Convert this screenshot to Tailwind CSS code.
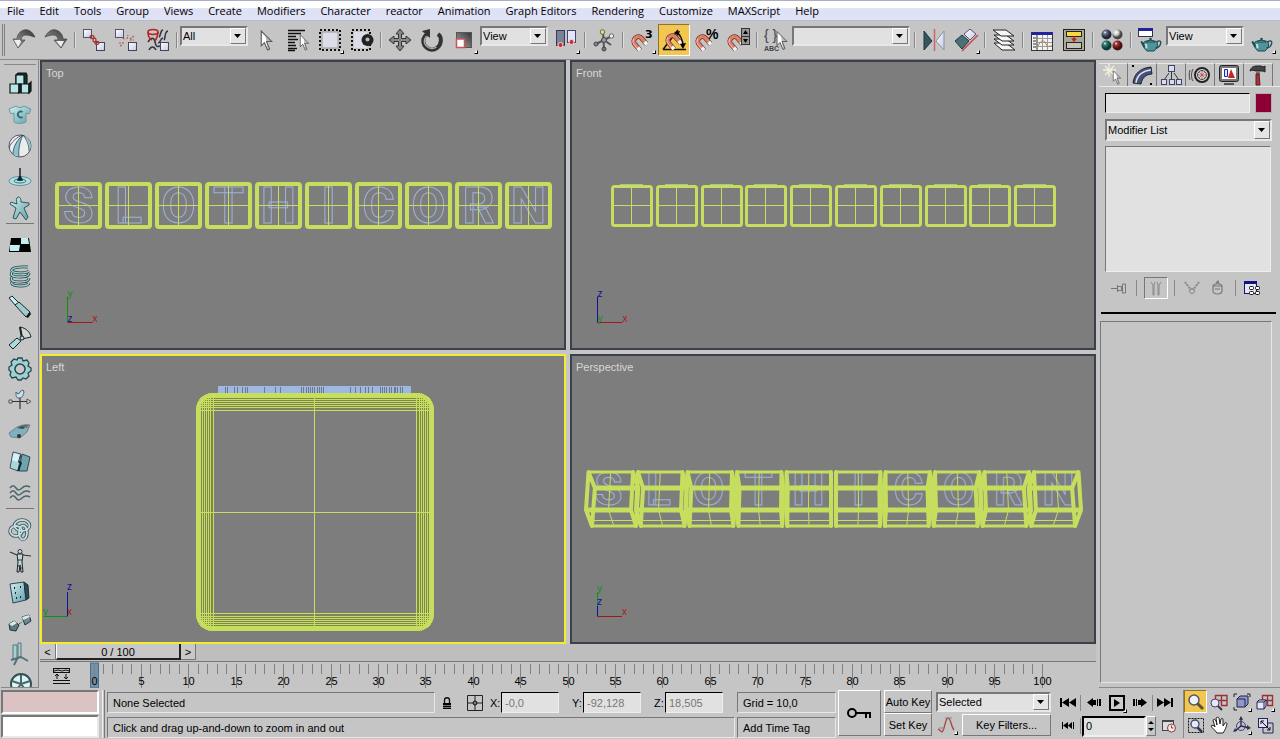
<!DOCTYPE html>
<html lang="en">
<head>
    <meta charset="UTF-8">
    <meta name="viewport" content="width=device-width, initial-scale=1.0">
    <title>3D Editor</title>
    <script src="https://cdn.jsdelivr.net/npm/@tailwindcss/browser@4"></script>
</head>
<body class="flex h-screen min-h-[600px] flex-col overflow-hidden bg-[#c5c5c5] font-['Liberation_Sans',sans-serif] text-[11px] leading-4 text-black">

    <!-- Shared gradients and small parts -->
    <svg class="absolute h-0 w-0" aria-hidden="true">
        <defs>
            <linearGradient id="steelR" x1="1" y1="0" x2="0" y2="1"><stop offset="0" stop-color="#333"/><stop offset="1" stop-color="#aaa"/></linearGradient>
            <linearGradient id="teal" x1="0" y1="0" x2="1" y2="1"><stop offset="0" stop-color="#d4f1f1"/><stop offset="1" stop-color="#5f9ea6"/></linearGradient>
            <linearGradient id="paper" x1="0" y1="0" x2="1" y2="1"><stop offset="0" stop-color="#fff"/><stop offset="1" stop-color="#c3c9e6"/></linearGradient>
            <radialGradient id="ballN" cx=".35" cy=".3"><stop offset="0" stop-color="#fff"/><stop offset=".3" stop-color="#6b7594"/><stop offset="1" stop-color="#1f2538"/></radialGradient>
            <radialGradient id="ballW" cx=".35" cy=".3"><stop offset="0" stop-color="#fff"/><stop offset=".5" stop-color="#ccc"/><stop offset="1" stop-color="#444"/></radialGradient>
            <radialGradient id="ballG" cx=".35" cy=".3"><stop offset="0" stop-color="#fff"/><stop offset=".3" stop-color="#36897c"/><stop offset="1" stop-color="#0d3a33"/></radialGradient>
            <radialGradient id="ballR" cx=".35" cy=".3"><stop offset="0" stop-color="#fff"/><stop offset=".3" stop-color="#b33a3a"/><stop offset="1" stop-color="#4a0f0f"/></radialGradient>
            <symbol id="fly" viewBox="0 0 4 4"><path d="M4 0v4H0z" fill="#000"/><path d="M3 0v3H0z" fill="#fff"/></symbol>
            <symbol id="cursor" viewBox="0 0 12 20"><path d="M1 1v14l3-3 3 7 2-1-3-7h5z" fill="#fff" stroke="#555"/><path d="M7 19l2-1-3-7h5L5 5z" fill="#777" opacity=".5"/></symbol>
            <symbol id="magnet" viewBox="0 0 18 18"><g transform="rotate(-40 9 9)" fill="none"><path d="M4.500 16V8a4.500 4.500 0 0 1 9 0v8" stroke="#6e3325" stroke-width="4.800"/><path d="M4.500 15.500V8a4.500 4.500 0 0 1 9 0v7.500" stroke="#dc8068" stroke-width="3.400"/><path d="M4.500 12.500v3.500M13.500 12.500v3.500" stroke="#f4f4f4" stroke-width="3.600"/><path d="M3.500 12V8a5.500 5.500 0 0 1 4-5" stroke="#f3b9a8"/></g></symbol>
            <symbol id="teapot" viewBox="0 0 22 15"><path d="M4 5c-1 2-1 6 3 9h7c4-3 4-7 3-9-3-2-10-2-13 0z" fill="#4f939b" stroke="#1d4a50"/><path d="M4.500 10C3 9 3 6 1 4.500" fill="none" stroke="#1d4a50" stroke-width="2"/><path d="M16.500 5c3-2 5-1 4 2s-3 4-5 4" fill="none" stroke="#1d4a50" stroke-width="1.300"/><path d="M6 5c2-2 7-2 9 0z" fill="#6fb5bc" stroke="#1d4a50"/><circle cx="10.500" cy="2" r="1.300" fill="#1d4a50"/><path d="M6 7c0 2 0 3 1 4" stroke="#bde4e6" stroke-width="2" fill="none"/></symbol>
            <symbol id="drop" viewBox="0 0 8 4"><path d="M0 0h7L3.500 4z"/></symbol>
        </defs>
    </svg>

    <nav class="flex h-[21px] shrink-0 items-center gap-[15px] border-t border-b border-t-[#a9b0bf] border-b-[#b9bcc8] bg-linear-to-b from-white from-35% to-[#dfe2f5] to-40% pl-[7px] font-['Open_Sans',sans-serif] text-[11px] whitespace-nowrap">
        <a href="#">File</a>
        <a href="#">Edit</a>
        <a href="#">Tools</a>
        <a href="#">Group</a>
        <a href="#">Views</a>
        <a href="#">Create</a>
        <a href="#">Modifiers</a>
        <a href="#">Character</a>
        <a href="#">reactor</a>
        <a href="#">Animation</a>
        <a href="#">Graph Editors</a>
        <a href="#">Rendering</a>
        <a href="#">Customize</a>
        <a href="#">MAXScript</a>
        <a href="#">Help</a>
    </nav>

    <!-- Main toolbar -->
    <div class="flex h-[39px] shrink-0 items-center border-b border-[#8a8a8a]">
        <div class="mr-[3px] ml-[2px] h-8 w-[3px] border-x border-[#808080]"></div>
        <button aria-label="Undo" class="flex h-8 w-8 items-center justify-center"><svg class="h-7 w-7" viewBox="0 0 28 28"><path d="M25 11C22 5 18 3 14 4S7 9 7 13H3l5 9 7-8h-4c0-3 2-5 5-5s5 1 8 2z" fill="url(#steelR)" stroke="#444" stroke-width=".7"/><path d="M4 14l4 7 3-5-1-2z" fill="#eee"/></svg></button>
        <button aria-label="Redo" class="flex h-8 w-8 items-center justify-center"><svg class="h-7 w-7" viewBox="0 0 28 28"><path d="M3 11C6 5 10 3 14 4s7 5 7 9h4l-6 9-7-8h4c0-3-2-5-5-5s-5 1-8 2z" fill="url(#steelR)" stroke="#444" stroke-width=".7"/><path d="M14 15l5 6 3-6z" fill="#eee"/></svg></button>
        <span class="mx-[2px] h-4 w-[2px] border-l border-[#888] bg-[#ddd]"></span>
        <button aria-label="Select and link" class="flex h-8 w-8 items-center justify-center"><svg class="h-7 w-7" viewBox="0 0 28 28"><rect x="3.500" y="3.500" width="8" height="8" fill="url(#paper)" stroke="#556"/><rect x="16.500" y="16.500" width="8" height="8" fill="url(#paper)" stroke="#445"/><g fill="none" stroke="#a33" stroke-width="1.300"><ellipse cx="12" cy="11" rx="2" ry="1.500"/><ellipse cx="14.500" cy="14" rx="1.500" ry="2"/><ellipse cx="17" cy="17" rx="2" ry="1.500"/></g></svg></button>
        <button aria-label="Unlink selection" class="flex h-8 w-8 items-center justify-center"><svg class="h-7 w-7" viewBox="0 0 28 28"><rect x="3.500" y="3.500" width="8" height="8" fill="url(#paper)" stroke="#556"/><rect x="16.500" y="16.500" width="8" height="8" fill="url(#paper)" stroke="#445"/><path d="M11 12l2 2m-2 2v3m-4-2h3m5-4l1-4m2 4l4-3m-4 4h4M8 20l2-1" stroke="#b55" stroke-width="1.200" stroke-dasharray="2 1"/></svg></button>
        <button aria-label="Bind to space warp" class="flex h-8 w-8 items-center justify-center"><svg class="h-7 w-7" viewBox="0 0 28 28"><g fill="none" stroke="#334" stroke-width="1.500"><path d="M4 16c3-5 6-5 7 0s2 5 5 4M5 24c2-4 5-4 7 0M15 11c2-1 1-7 4-7M20 14c2-3 0-8 4-9M14 17c3 0 2-5 5-5"/></g><g fill="none" stroke="#b22" stroke-width="1.600"><ellipse cx="9" cy="6" rx="5" ry="2.500"/><path d="M4 6c0 5 2 7 4 8M14 6c0 4-1 6-3 9"/></g><rect x="16.500" y="16.500" width="8" height="8" fill="url(#paper)" stroke="#445"/></svg></button>
        <span class="mx-[2px] h-4 w-[2px] border-l border-[#888] bg-[#ddd]"></span>
        <div class="relative mt-[5px] mr-[2px] h-5 w-[68px] self-start border-2 border-t-[#777] border-r-[#e8e8e8] border-b-[#e8e8e8] border-l-[#777] bg-[#e1e1e1]">
            <select aria-label="Selection filter" class="h-4 w-full appearance-none bg-transparent pl-px leading-4 outline-none"><option>All</option></select>
            <span class="pointer-events-none absolute inset-y-0 right-0 flex w-4 items-center justify-center border border-t-white border-r-[#777] border-b-[#777] border-l-white bg-[#e4e4e4]"><svg class="h-1 w-2"><use href="#drop"/></svg></span>
        </div>
        <button aria-label="Select object" class="flex h-8 w-8 items-center justify-center"><svg class="h-7 w-7" viewBox="0 0 28 28"><use href="#cursor" x="8" y="4" width="13" height="21"/></svg></button>
        <button aria-label="Select by name" class="flex h-8 w-8 items-center justify-center"><svg class="h-7 w-7" viewBox="0 0 28 28"><path d="M4 4.500h17M4 7.500h13M4 10.500h8M4 13.500h10M4 16.500h7M4 19.500h8M4 22.500h9M4 24.500h7" stroke="#111" stroke-width="1.300"/><use href="#cursor" x="15" y="8" width="11" height="17"/></svg></button>
        <button aria-label="Rectangular selection region" class="flex h-8 w-8 items-center justify-center"><svg class="h-7 w-7" viewBox="0 0 28 28"><rect x="6" y="6" width="16" height="16" fill="#dcdde8" stroke="#999"/><rect x="4" y="4" width="20" height="20" fill="none" stroke="#111" stroke-width="2" stroke-dasharray="2 2"/><use href="#fly" x="24" y="24" width="4" height="4"/></svg></button>
        <button aria-label="Window or crossing" class="flex h-8 w-8 items-center justify-center"><svg class="h-7 w-7" viewBox="0 0 28 28"><rect x="6" y="6" width="13" height="16" fill="#dcdde8"/><rect x="4" y="4" width="18" height="20" fill="none" stroke="#111" stroke-width="2" stroke-dasharray="2 2"/><circle cx="19.500" cy="14" r="6" fill="#222"/><circle cx="19.500" cy="13.500" r="2" fill="#bbb"/></svg></button>
        <span class="mx-[2px] h-4 w-[2px] border-l border-[#888] bg-[#ddd]"></span>
        <button aria-label="Move" class="flex h-8 w-8 items-center justify-center"><svg class="h-7 w-7" viewBox="0 0 28 28"><path d="M14 3l4 5h-2.500v4.500H20V10l5 4-5 4v-2.500h-4.500V20H18l-4 5-4-5h2.500v-4.500H8V18l-5-4 5-4v2.500h4.500V8H10z" fill="#888" stroke="#333"/></svg></button>
        <button aria-label="Rotate" class="flex h-8 w-8 items-center justify-center"><svg class="h-7 w-7" viewBox="0 0 28 28"><path d="M9 8c-5 4-5 10 0 14 3 2 7 2 10 0 5-4 5-11 1-14" fill="none" stroke="#333" stroke-width="4"/><path d="M8.500 10c-3 4-3 8 1 11 3 2 6 2 9 0" fill="none" stroke="#aaa" stroke-width="1.300"/><path d="M4 5l8-2v9z" fill="#333"/></svg></button>
        <button aria-label="Scale" class="flex h-8 w-8 items-center justify-center"><svg class="h-7 w-7" viewBox="0 0 28 28"><rect x="6.500" y="6.500" width="15" height="15" fill="url(#steelR)" stroke="#555"/><rect x="6.500" y="13" width="8" height="8.500" fill="#fff" stroke="#c55" stroke-width="1.500"/><use href="#fly" x="24" y="24" width="4" height="4"/></svg></button>
        <div class="relative mt-[5px] mr-[2px] h-5 w-[68px] self-start border-2 border-t-[#777] border-r-[#e8e8e8] border-b-[#e8e8e8] border-l-[#777] bg-[#e1e1e1]">
            <select aria-label="Reference coordinate system" class="h-4 w-full appearance-none bg-transparent pl-px leading-4 outline-none"><option>View</option></select>
            <span class="pointer-events-none absolute inset-y-0 right-0 flex w-4 items-center justify-center border border-t-white border-r-[#777] border-b-[#777] border-l-white bg-[#e4e4e4]"><svg class="h-1 w-2"><use href="#drop"/></svg></span>
        </div>
        <button aria-label="Use pivot point center" class="flex h-8 w-8 items-center justify-center"><svg class="h-7 w-7" viewBox="0 0 28 28"><rect x="4.500" y="4.500" width="8" height="15" fill="#7a8297" stroke="#333b55"/><rect x="15.500" y="4.500" width="8" height="12" fill="#e2e6f5" stroke="#447"/><circle cx="8.500" cy="19" r="2.500" fill="#b33" stroke="#fcc"/><circle cx="19.500" cy="16" r="2.500" fill="#b33" stroke="#fcc"/><use href="#fly" x="24" y="24" width="4" height="4"/></svg></button>
        <span class="mx-[2px] h-4 w-[2px] border-l border-[#888] bg-[#ddd]"></span>
        <button aria-label="Select and manipulate" class="flex h-8 w-8 items-center justify-center"><svg class="h-7 w-7" viewBox="0 0 28 28"><path d="M13 6l1 17M6 18l8-4 8-4M14 14l7 5" stroke="#555" stroke-width="2" fill="none"/><circle cx="12.500" cy="6" r="2.300" fill="#e9df6b" stroke="#665"/><circle cx="21.500" cy="10" r="2.200" fill="#eee" stroke="#666"/><circle cx="14" cy="14" r="2.500" fill="#999" stroke="#444"/><circle cx="14" cy="23" r="2" fill="#777" stroke="#444"/><circle cx="6" cy="18" r="2" fill="#888" stroke="#444"/></svg></button>
        <span class="mx-[2px] h-4 w-[2px] border-l border-[#888] bg-[#ddd]"></span>
        <button aria-label="Snaps toggle" class="flex h-8 w-8 items-center justify-center"><svg class="h-7 w-7" viewBox="0 0 28 28"><use href="#magnet" x="2" y="7" width="18" height="18"/><text x="17" y="12" class="font-['DejaVu_Sans',sans-serif] text-[11px] font-bold">3</text><use href="#fly" x="24" y="24" width="4" height="4"/></svg></button>
        <button aria-label="Angle snap toggle" aria-pressed="true" class="flex h-8 w-8 items-center justify-center border border-t-[#8a7530] border-r-white border-b-white border-l-[#8a7530] bg-[#f2c64f]"><svg class="h-7 w-7" viewBox="0 0 28 28"><path d="M3 23.500h23M3 23.500L18 4" stroke="#111" stroke-width="1.500" fill="none"/><use href="#magnet" x="4" y="6" width="18" height="18"/><path d="M16 6c4 2 7 8 7 14" fill="none" stroke="#111" stroke-width="1.500"/><path d="M14 6l6-1-2 5zM20 18l6-1-3 6z"/></svg></button>
        <button aria-label="Percent snap toggle" class="flex h-8 w-8 items-center justify-center"><svg class="h-7 w-7" viewBox="0 0 28 28"><use href="#magnet" x="2" y="7" width="18" height="18"/><text x="14" y="13" class="font-['Liberation_Sans',sans-serif] text-[14px] font-bold">%</text></svg></button>
        <button aria-label="Spinner snap toggle" class="flex h-8 w-8 items-center justify-center"><svg class="h-7 w-7" viewBox="0 0 28 28"><use href="#magnet" x="2" y="7" width="18" height="18"/><rect x="17.500" y="2.500" width="8" height="8" fill="#999" stroke="#333"/><rect x="17.500" y="10.500" width="8" height="8" fill="#999" stroke="#333"/><path d="M19 8h5l-2.500-4zM19 13h5l-2.500 4z"/></svg></button>
        <span class="mx-[2px] h-4 w-[2px] border-l border-[#888] bg-[#ddd]"></span>
        <button aria-label="Edit named selection sets" class="flex h-8 w-8 items-center justify-center"><svg class="h-7 w-7" viewBox="0 0 28 28"><text x="2" y="14" class="font-['Liberation_Sans',sans-serif] text-[14px]" fill="#444">{ }</text><text x="2" y="25" class="font-['Liberation_Sans',sans-serif] text-[7px] font-bold" fill="#444">ABC</text><use href="#cursor" x="14" y="4" width="12" height="21"/></svg></button>
        <div class="relative mt-[5px] mr-[2px] h-5 w-[118px] self-start border-2 border-t-[#777] border-r-[#e8e8e8] border-b-[#e8e8e8] border-l-[#777] bg-[#e1e1e1]">
            <select aria-label="Named selection sets" class="h-4 w-full appearance-none bg-transparent pl-px leading-4 outline-none"><option></option></select>
            <span class="pointer-events-none absolute inset-y-0 right-0 flex w-4 items-center justify-center border border-t-white border-r-[#777] border-b-[#777] border-l-white bg-[#e4e4e4]"><svg class="h-1 w-2"><use href="#drop"/></svg></span>
        </div>
        <span class="mx-[2px] h-4 w-[2px] border-l border-[#888] bg-[#ddd]"></span>
        <button aria-label="Mirror" class="flex h-8 w-8 items-center justify-center"><svg class="h-7 w-7" viewBox="0 0 28 28"><path d="M4 5v19l8-9z" fill="#36565b" stroke="#234"/><path d="M24 5v19l-8-9z" fill="url(#paper)" stroke="#8894a0"/><path d="M14.500 3v22" stroke="#c66" stroke-width="1.500"/></svg></button>
        <button aria-label="Align" class="flex h-8 w-8 items-center justify-center"><svg class="h-7 w-7" viewBox="0 0 28 28"><path d="M3 15l7-6 7 6-7 8z" fill="#4a7178" stroke="#24383c"/><path d="M12 8l6-5 6 5-6 6z" fill="url(#paper)" stroke="#556"/><path d="M10 25L26 9" stroke="#c44" stroke-width="1.400"/><use href="#fly" x="24" y="24" width="4" height="4"/></svg></button>
        <span class="mx-[2px] h-4 w-[2px] border-l border-[#888] bg-[#ddd]"></span>
        <button aria-label="Layer manager" class="flex h-8 w-8 items-center justify-center"><svg class="h-7 w-7" viewBox="0 0 28 28"><g fill="#f6f6f6" stroke="#222"><path d="M4 17h12l9 7H12z"/><path d="M4 13h12l8 6H12z"/><path d="M4 9h12l8 6H12z"/><path d="M3 4h13l8 6H11z"/></g></svg></button>
        <span class="mx-[2px] h-4 w-[2px] border-l border-[#888] bg-[#ddd]"></span>
        <button aria-label="Curve editor" class="flex h-8 w-8 items-center justify-center"><svg class="h-7 w-7" viewBox="0 0 28 28"><rect x="3.500" y="6.500" width="21" height="18" fill="#f4f4ea" stroke="#334"/><path d="M3 6h22v3H3z" fill="#22229a"/><path d="M9 9v15M5 12h3M5 15h3M5 18h3M5 21h3" stroke="#334"/><path d="M10 12.500h14M10 16.500h14M10 20.500h14M14.500 9v15M19.500 9v15" stroke="#99a"/><path d="M10 20c3-6 6-7 8-2s4 1 6 2" fill="none" stroke="#a84"/></svg></button>
        <button aria-label="Schematic view" class="flex h-8 w-8 items-center justify-center"><svg class="h-7 w-7" viewBox="0 0 28 28"><rect x="3.500" y="3.500" width="21" height="21" fill="#aaa995" stroke="#222"/><rect x="6.500" y="5.500" width="15" height="5" fill="#f6d93c" stroke="#222"/><rect x="6.500" y="16.500" width="15" height="6" fill="#c4c4b8" stroke="#222"/><path d="M14 10v4" stroke="#b22" stroke-width="1.500"/><path d="M11 12.500h6L14 16z" fill="#b22"/></svg></button>
        <span class="mx-[2px] h-4 w-[2px] border-l border-[#888] bg-[#ddd]"></span>
        <button aria-label="Material editor" class="flex h-8 w-8 items-center justify-center"><svg class="h-7 w-7" viewBox="0 0 28 28"><circle cx="8.500" cy="8.500" r="5" fill="url(#ballN)"/><circle cx="19.500" cy="8.500" r="5" fill="url(#ballW)"/><circle cx="8.500" cy="19.500" r="5" fill="url(#ballG)"/><circle cx="19.500" cy="19.500" r="5" fill="url(#ballR)"/></svg></button>
        <span class="mx-[2px] h-4 w-[2px] border-l border-[#888] bg-[#ddd]"></span>
        <button aria-label="Render scene dialog" class="flex h-8 w-8 items-center justify-center"><svg class="h-7 w-7" viewBox="0 0 28 28"><rect x="2.500" y="2.500" width="14" height="8" fill="#fff" stroke="#335"/><path d="M2 2h15v3H2z" fill="#22229a"/><use href="#teapot" x="4" y="11" width="22" height="15"/></svg></button>
        <div class="relative mt-[5px] mr-[2px] h-5 w-[78px] self-start border-2 border-t-[#777] border-r-[#e8e8e8] border-b-[#e8e8e8] border-l-[#777] bg-[#e1e1e1]">
            <select aria-label="Render type" class="h-4 w-full appearance-none bg-transparent pl-px leading-4 outline-none"><option>View</option></select>
            <span class="pointer-events-none absolute inset-y-0 right-0 flex w-4 items-center justify-center border border-t-white border-r-[#777] border-b-[#777] border-l-white bg-[#e4e4e4]"><svg class="h-1 w-2"><use href="#drop"/></svg></span>
        </div>
        <button aria-label="Quick render" class="flex h-8 w-8 items-center justify-center"><svg class="h-7 w-7" viewBox="0 0 28 28"><use href="#teapot" x="3" y="11" width="22" height="15"/><use href="#fly" x="24" y="24" width="4" height="4"/></svg></button>
    </div>

    <div class="flex min-h-0 flex-1">

        <!-- reactor toolbar -->
        <aside class="mr-px ml-px flex w-[38px] shrink-0 flex-col items-center overflow-hidden border-r border-b border-[#888] pt-1">
            <div class="mb-[3px] w-8 shrink-0 border-t border-[#888]"></div>
            <button aria-label="Rigid body collection" class="flex h-[31px] w-8 shrink-0 items-center justify-center"><svg class="h-6 w-6" viewBox="0 0 24 24"><g stroke="#111" stroke-width="1.200"><path d="M10 1h8l1 2v9H8V3z" fill="#163338"/><path d="M8 3h8v9H8zM2 12h9v9H2zM13 12h8v9h-8z" fill="#b6e6e8"/><path d="M21 12l2-2v9l-2 2zM11 12h2v8l-2 1z" fill="#163338"/></g></svg></button>
            <button aria-label="Cloth collection" class="flex h-[31px] w-8 shrink-0 items-center justify-center"><svg class="h-6 w-6" viewBox="0 0 24 24"><path d="M8 3c2 2 6 2 8 0l7 3-2 5-3-1v9c-4 2-9 2-12 0v-9l-3 1-2-5z" fill="url(#teal)" stroke="#6a9aa2"/><path d="M14.500 9a3 3 0 1 0 0 5" fill="none" stroke="#2d6570" stroke-width="1.800"/></svg></button>
            <button aria-label="Soft body collection" class="flex h-[31px] w-8 shrink-0 items-center justify-center"><svg class="h-6 w-6" viewBox="0 0 24 24"><circle cx="12" cy="12" r="11" fill="#e9edee" stroke="#556"/><path d="M15 1C9 6 5 13 5 20l6 3c-1-8 1-16 4-22z" fill="#8cc3cd"/><path d="M16 2c4 4 6 9 5 15l2-4c0-5-3-10-7-11z" fill="#8cc3cd"/><path d="M15 1C9 6 5 13 5 20M15 1c-3 6-5 14-4 22M15 1c4 5 6 10 6 16M15 1C9 3 3 8 1 14" fill="none" stroke="#345" stroke-width=".8"/></svg></button>
            <button aria-label="Rope collection" class="flex h-[31px] w-8 shrink-0 items-center justify-center"><svg class="h-6 w-6" viewBox="0 0 24 24"><ellipse cx="12" cy="16" rx="11" ry="4.500" fill="#b6e1e3" stroke="#5c9299"/><ellipse cx="12" cy="16" rx="6" ry="2" fill="none" stroke="#39707a"/><path d="M12 3v13M10 15l2-4 2 4z" stroke="#123" fill="#456" stroke-width="1.500"/></svg></button>
            <button aria-label="Deforming mesh collection" class="flex h-[31px] w-8 shrink-0 items-center justify-center"><svg class="h-6 w-6" viewBox="0 0 24 24"><path d="M10 1c2 0 3 1 3 5l8 1v2l-5 3 4 9-2 3-6-8-4 7-3-1 3-10-6-4 1-2 6 2c-1-4-1-6 1-7z" fill="url(#teal)" stroke="#33565c"/></svg></button>
            <div class="h-[6px] w-7 shrink-0 border-t border-[#777]"></div>
            <button aria-label="Plane" class="flex h-[31px] w-8 shrink-0 items-center justify-center"><svg class="h-6 w-6" viewBox="0 0 24 24"><path d="M3 5h18l2 14H1z" fill="#000"/><path d="M13 5h7l1 6h-8zM2 12h10l-1 6H2z" fill="#c6eef0"/></svg></button>
            <button aria-label="Spring" class="flex h-[31px] w-8 shrink-0 items-center justify-center"><svg class="h-6 w-6" viewBox="0 0 24 24"><g fill="none"><path d="M20 3C8 2 2 5 4 7s13 3 17 0M4 8c-2 3 0 5 8 5s9-2 9-4M4 13c-2 3 0 5 8 5s9-2 9-4M4 18c-1 2 1 4 8 4s9-2 9-3" stroke="#234347" stroke-width="2.800"/><path d="M20 3C8 2 2 5 4 7s13 3 17 0M4 8c-2 3 0 5 8 5s9-2 9-4M4 13c-2 3 0 5 8 5s9-2 9-4M4 18c-1 2 1 4 8 4s9-2 9-3" stroke="#a5d3d6" stroke-width="1.300"/></g></svg></button>
            <button aria-label="Linear dashpot" class="flex h-[31px] w-8 shrink-0 items-center justify-center"><svg class="h-6 w-6" viewBox="0 0 24 24"><path d="M1 3l3-2 7 7-3 3z" fill="#c8eff1" stroke="#222"/><path d="M7 10l4-3 11 10-4 5z" fill="#9bcdd0" stroke="#222"/><path d="M18 22l4-5 1 2-3 4z" fill="#111"/></svg></button>
            <button aria-label="Angular dashpot" class="flex h-[31px] w-8 shrink-0 items-center justify-center"><svg class="h-6 w-6" viewBox="0 0 24 24"><path d="M12 1c6 1 10 5 11 10l-9 2z" fill="#cdd6d7" stroke="#222"/><path d="M14 12L12 1" stroke="#222" stroke-width="2"/><path d="M1 19l8-7 4 3-8 8z" fill="#a9dadd" stroke="#222"/><circle cx="14" cy="12" r="2" fill="#a9dadd" stroke="#222"/></svg></button>
            <button aria-label="Motor" class="flex h-[31px] w-8 shrink-0 items-center justify-center"><svg class="h-6 w-6" viewBox="0 0 24 24"><path d="M10 1h4l1 3 4-1 2 3-1 3 3 2v3l-3 2 1 3-3 3-3-1-2 2h-3l-2-3-4 1-2-3 1-3-2-2v-3l3-2-1-3 3-3 3 1z" fill="#9fd0d4" stroke="#24454a" stroke-width="1.300"/><circle cx="12" cy="12" r="5" fill="#c8c8c8" stroke="#24454a" stroke-width="1.500"/></svg></button>
            <button aria-label="Wind" class="flex h-[31px] w-8 shrink-0 items-center justify-center"><svg class="h-6 w-6" viewBox="0 0 24 24"><path d="M1 13.500h21M12 9v12" stroke="#333" stroke-width="1.200"/><path d="M19 11l4 2.500-4 2.500z" fill="#ddd" stroke="#333" stroke-width=".8"/><path d="M1 12h3v3H1z" fill="#ddd" stroke="#333" stroke-width=".8"/><path d="M8 4l2 2c2 0 2-4 5-4l1 2c-1 4-2 6-5 6S8 8 8 4z" fill="#c0e7ea" stroke="#557"/></svg></button>
            <button aria-label="Toy car" class="flex h-[31px] w-8 shrink-0 items-center justify-center"><svg class="h-6 w-6" viewBox="0 0 24 24"><path d="M1 14l8-6c4-2 9-3 13-2l-3 7-7 6-9-1z" fill="#7fb0bb" stroke="#50707a" stroke-width=".7"/><path d="M9 9c4-2 8-3 11-3l-5 4z" fill="#3c4a52"/><path d="M14 7l7-1-2 3z" fill="#8d6262"/><circle cx="11" cy="17" r="2" fill="#333"/></svg></button>
            <button aria-label="Fracture" class="flex h-[31px] w-8 shrink-0 items-center justify-center"><svg class="h-6 w-6" viewBox="0 0 24 24"><path d="M5 2l8 2-3 17-8-3z" fill="#a8d8db" stroke="#456"/><path d="M14 4l8 3-3 14-8 0z" fill="#6da5ab" stroke="#345"/><path d="M12 5l-2 6 3 2-3 8" fill="none" stroke="#123" stroke-width="1.800"/><path d="M6 3l6 2-2 7-6-2z" fill="#d6f2f3"/></svg></button>
            <button aria-label="Water" class="flex h-[31px] w-8 shrink-0 items-center justify-center"><svg class="h-6 w-6" viewBox="0 0 24 24"><path d="M2 7c2-3 4-3 6 0s4 2 6 0 4-3 8-1M2 12c2-3 4-3 6 0s4 2 6 0 4-3 8-1M2 17c2-3 4-3 6 0s4 2 6 0 4-3 8-1" fill="none" stroke="#47666b" stroke-width="1.500"/></svg></button>
            <div class="h-[6px] w-7 shrink-0 border-t border-[#777]"></div>
            <button aria-label="Constraint solver" class="flex h-[31px] w-8 shrink-0 items-center justify-center"><svg class="h-6 w-6" viewBox="0 0 24 24"><g fill="none" stroke="#3b5559" stroke-width="3.500"><ellipse cx="14" cy="7.500" rx="7.500" ry="5.500"/><ellipse cx="8" cy="13" rx="6" ry="5"/><ellipse cx="15" cy="14.500" rx="4" ry="7"/></g><g fill="none" stroke="#c4dfe1" stroke-width="1.800"><ellipse cx="14" cy="7.500" rx="7.500" ry="5.500"/><ellipse cx="8" cy="13" rx="6" ry="5"/><ellipse cx="15" cy="14.500" rx="4" ry="7"/></g></svg></button>
            <button aria-label="Rag doll constraint" class="flex h-[31px] w-8 shrink-0 items-center justify-center"><svg class="h-6 w-6" viewBox="0 0 24 24"><circle cx="12" cy="2.500" r="2" fill="#cde" stroke="#333"/><path d="M9 5h6l-1 8 1 10h-2l-1-7-1 7H9l1-10z" fill="#b9d8da" stroke="#222"/><path d="M9 6L2 3M15 6l8 1M9 11h5M10 17h2m1 2h2" stroke="#333" stroke-width="1.200"/></svg></button>
            <button aria-label="Hinge constraint" class="flex h-[31px] w-8 shrink-0 items-center justify-center"><svg class="h-6 w-6" viewBox="0 0 24 24"><path d="M2 4l14-2 2 18-13 3z" fill="url(#teal)" stroke="#345"/><path d="M16 2l4 3 1 13-3 2z" fill="#2c4b50" stroke="#234"/><path d="M6 8h1m5-1h1M7 13h1m4 4h1m-5 1h1" stroke="#123" stroke-width="2"/></svg></button>
            <button aria-label="Point to point constraint" class="flex h-[31px] w-8 shrink-0 items-center justify-center"><svg class="h-6 w-6" viewBox="0 0 24 24"><path d="M1 13l5-3 5 4-3 6-6-1z" fill="#62787c" stroke="#234"/><path d="M14 6l7-2 2 6-6 4z" fill="#70898d" stroke="#234"/><path d="M14 6l7-2 1 2-7 3zM1 13l5-3 3 2-5 3z" fill="#d9eced"/><path d="M11 13l3-2" stroke="#222" stroke-dasharray="1 1"/></svg></button>
            <button aria-label="Prismatic constraint" class="flex h-[31px] w-8 shrink-0 items-center justify-center"><svg class="h-6 w-6" viewBox="0 0 24 24"><path d="M5 3h4v14H5zM10 1h3v14h-3z" fill="#a9cfd3" stroke="#577"/><path d="M3 18l10-3 7 4M10 15l-4 8" fill="none" stroke="#577075" stroke-width="2"/></svg></button>
            <button aria-label="Car wheel constraint" class="flex h-[31px] w-8 shrink-0 items-center justify-center"><svg class="h-6 w-6" viewBox="0 0 24 24"><circle cx="13" cy="11" r="10" fill="#e0f1f1" stroke="#344f53" stroke-width="2"/><path d="M13 11V2M13 11l9-3M13 11l6 8M13 11l-6 8M13 11L4 8" stroke="#48696e" stroke-width="2"/><path d="M1 20l7-4v6H1z" fill="#6aa3a9"/></svg></button>
        </aside>

        <main class="flex min-w-0 flex-1 flex-col">
            <div class="grid min-h-0 flex-1 grid-cols-2 grid-rows-2 gap-1">
                <section class="relative min-h-0 border-2 border-[#3b414b] bg-[#7d7d7d]">
                    <h2 class="absolute top-[3px] left-1 text-[#d8d8d8]">Top</h2>
                    <svg id="view-top" class="h-full w-full" viewBox="0 0 522 286"></svg>
                </section>
                <section class="relative min-h-0 border-2 border-[#3b414b] bg-[#7d7d7d]">
                    <h2 class="absolute top-[3px] left-1 text-[#d8d8d8]">Front</h2>
                    <svg id="view-front" class="h-full w-full" viewBox="0 0 522 286"></svg>
                </section>
                <section class="relative min-h-0 border-2 border-[#f5ea2e] bg-[#7d7d7d]">
                    <h2 class="absolute top-[3px] left-1 text-[#d8d8d8]">Left</h2>
                    <svg id="view-left" class="h-full w-full" viewBox="0 0 522 286"></svg>
                </section>
                <section class="relative min-h-0 border-2 border-[#3b414b] bg-[#7d7d7d]">
                    <h2 class="absolute top-[3px] left-1 text-[#d8d8d8]">Perspective</h2>
                    <svg id="view-persp" class="h-full w-full" viewBox="0 0 522 286"></svg>
                </section>
            </div>

            <!-- Time slider -->
            <div class="flex h-[18px] shrink-0 border-b border-[#777] bg-[#bebebe] pb-px">
                <button class="w-4 border-r border-b border-[#777] bg-[#c8c8c8]">&lt;</button>
                <button class="w-[125px] border-r-2 border-b-2 border-l border-r-[#222] border-b-[#222] border-l-white bg-[#c8c8c8]">0 / 100</button>
                <button class="w-[15px] border-r border-b border-[#777] bg-[#c8c8c8]">&gt;</button>
            </div>
            <svg id="ruler" class="h-[26px] w-full shrink-0" viewBox="0 0 1056 26"></svg>
        </main>

        <!-- Command panel -->
        <aside class="ml-[3px] flex w-[181px] shrink-0 flex-col border-b border-[#888] pt-[3px]">
            <div class="flex h-6 border-b border-[#e8e8e8]">
                <button aria-label="Create" class="flex w-[29px] items-center justify-center border-t border-r border-t-[#e8e8e8] border-r-[#777]"><svg class="h-6 w-6" viewBox="0 0 24 24"><path d="M8 1v13M2 7h13M4 3l9 9M13 3l-9 9" stroke="#f4f2da" stroke-width="1.300"/><use href="#cursor" x="11" y="7" width="10" height="15"/></svg></button>
                <button aria-label="Modify" class="flex w-[29px] items-center justify-center border-t border-r border-t-[#e8e8e8] border-r-[#777]"><svg class="h-6 w-6" viewBox="0 0 24 24"><path d="M3 20C4 11 10 5 21 4l1 7c-6 0-10 4-11 10z" fill="#46527e" stroke="#222"/><path d="M6 20C7 12 12 8 21 7" fill="none" stroke="#dce2f4" stroke-width="1.500"/><path d="M2 2h2v2H2zM20 20h2v2h-2z"/></svg></button>
                <button aria-label="Hierarchy" class="flex w-[29px] items-center justify-center border-t border-r border-t-[#e8e8e8] border-r-[#777]"><svg class="h-6 w-6" viewBox="0 0 24 24"><path d="M12.500 8v9M10 10l-5 7M15 10l5 7" fill="none" stroke="#334"/><g fill="#d8dcf0" stroke="#446"><rect x="9.500" y="2.500" width="6" height="6"/><rect x="2.500" y="16.500" width="5" height="5"/><rect x="10.500" y="16.500" width="5" height="5"/><rect x="17.500" y="16.500" width="5" height="5"/></g></svg></button>
                <button aria-label="Motion" class="flex w-[29px] items-center justify-center border-t border-r border-t-[#e8e8e8] border-r-[#777]"><svg class="h-6 w-6" viewBox="0 0 24 24"><circle cx="14" cy="12" r="7" fill="#ddd" stroke="#222" stroke-width="2"/><circle cx="14" cy="12" r="4.500" fill="none" stroke="#444"/><path d="M10 12h8M14 8v8M11 9l6 6M17 9l-6 6" stroke="#a44" stroke-width=".7"/><path d="M5 6c-2 4-2 9 0 12M2 7c-1 3-1 7 0 10" fill="none" stroke="#444"/></svg></button>
                <button aria-label="Display" class="flex w-[29px] items-center justify-center border-t border-r border-t-[#e8e8e8] border-r-[#777]"><svg class="h-6 w-6" viewBox="0 0 24 24"><rect x="2.500" y="2.500" width="19" height="16" rx="2" fill="#777" stroke="#222"/><rect x="5" y="5" width="14" height="11" fill="#fff"/><path d="M7.500 6.500h3v7h-3z" fill="#dfe4ff" stroke="#22a"/><path d="M14 6l4 9h-7z" fill="#c22"/><path d="M7 20h10v2H7z" fill="#555"/></svg></button>
                <button aria-label="Utilities" class="flex w-[29px] items-center justify-center border-t border-r border-t-[#e8e8e8] border-r-[#777]"><svg class="h-6 w-6" viewBox="0 0 24 24"><path d="M4 8c1-4 4-5 7-5h4l2 1 2-1v6l-2-1h-7c-3-1-4-1-6 0z" fill="#444" stroke="#222"/><path d="M10 8h4v5h-4z" fill="#777"/><path d="M10 11h3l1 11h-4z" fill="#a33" stroke="#522"/></svg></button>
            </div>
            <div class="mt-[6px] mr-2 ml-[6px] flex gap-[5px]">
                <input type="text" aria-label="Object name" class="h-5 min-w-0 flex-1 border border-t-black border-r-[#eee] border-b-[#eee] border-l-black bg-[#e1e1e1] px-1 outline-none">
                <button aria-label="Object color" class="h-5 w-[17px] border border-[#b0b0b0] bg-[#8c0035]"></button>
            </div>
            <div class="relative mt-[6px] mr-2 ml-[6px] h-[22px] border-2 border-t-[#777] border-r-[#e8e8e8] border-b-[#e8e8e8] border-l-[#777] bg-[#e1e1e1]">
                <select aria-label="Modifier List" class="h-[18px] w-full appearance-none bg-transparent pl-px outline-none"><option>Modifier List</option></select>
                <span class="pointer-events-none absolute inset-y-0 right-0 flex w-4 items-center justify-center border border-t-white border-r-[#777] border-b-[#777] border-l-white bg-[#e4e4e4]"><svg class="h-1 w-2"><use href="#drop"/></svg></span>
            </div>
            <div class="mt-[5px] mr-[9px] ml-[6px] h-[126px] shrink-0 border border-t-[#777] border-r-[#eee] border-b-[#eee] border-l-[#777] bg-[#e1e1e1]"></div>
            <div class="mt-1 flex h-6 items-center justify-between pr-[18px] pl-[11px]">
                <button aria-label="Pin stack"><svg class="h-5 w-5" viewBox="0 0 20 20"><path d="M1 10.500h6M7.500 7v7M7.500 8.500h4v4h-4M12.500 6v9h3V6z" fill="none" stroke="#777"/></svg></button>
                <span class="h-4 w-px bg-[#888]"></span>
                <button aria-label="Show end result" class="border border-t-[#777] border-r-white border-b-white border-l-[#777] px-px"><svg class="h-5 w-5" viewBox="0 0 20 20"><path d="M5 4l2 3v10h1V7l1-3M11 4l1 3v10h1V7l2-3" fill="none" stroke="#888"/></svg></button>
                <span class="h-4 w-px bg-[#888]"></span>
                <button aria-label="Make unique"><svg class="h-5 w-5" viewBox="0 0 20 20"><path d="M3 4l6 8M17 4l-6 8" stroke="#888" stroke-width="2" stroke-dasharray="2 1"/><circle cx="10" cy="13" r="2.500" fill="none" stroke="#888"/></svg></button>
                <button aria-label="Remove modifier"><svg class="h-5 w-5" viewBox="0 0 20 20"><path d="M5 8h9v5c0 4-9 4-9 0zM5 8c1-3 8-3 9 0M8 5l2-2 1 3M7 11h5" fill="none" stroke="#777" stroke-width="1.200"/></svg></button>
                <span class="h-4 w-px bg-[#888]"></span>
                <button aria-label="Configure modifier sets"><svg class="h-5 w-5" viewBox="0 0 20 20"><rect x="2.500" y="3.500" width="12" height="12" fill="#e6e6f0" stroke="#118"/><path d="M2 3h13v3H2z" fill="#118"/><g fill="#fff" stroke="#111"><rect x="7.500" y="8.500" width="4" height="3" rx="1"/><rect x="13.500" y="8.500" width="4" height="3" rx="1"/><rect x="7.500" y="13.500" width="4" height="3" rx="1"/><rect x="13.500" y="13.500" width="4" height="3" rx="1"/></g></svg></button>
            </div>
            <div class="mt-3 mr-1 ml-[2px] h-[2px] shrink-0 bg-black"></div>
            <div class="mt-[7px] mr-2 mb-1 ml-px flex-1 border border-t-[#777] border-r-[#e6e6e6] border-b-[#e6e6e6] border-l-[#777]"></div>
        </aside>
    </div>

    <!-- Status bar -->
    <footer class="flex h-[51px] shrink-0 gap-[2px] pt-[2px] pb-px">
        <div class="ml-px flex w-[98px] flex-col gap-px">
            <input type="text" aria-label="Macro recorder" class="h-6 w-full border-2 border-t-[#777] border-r-white border-b-white border-l-[#777] bg-[#dcc3c3] outline-none">
            <input type="text" aria-label="Script listener" class="h-[23px] w-full border-2 border-t-[#777] border-r-[#e8e8e8] border-b-[#e8e8e8] border-l-[#777] bg-white outline-none">
        </div>
        <div class="ml-px w-[3px] border-x border-l-[#eee] border-r-[#777]"></div>
        <div class="flex min-w-0 flex-1 flex-col gap-1 pt-[2px]">
            <div class="flex h-[21px] items-center">
                <p class="h-[21px] min-w-0 flex-1 truncate border border-t-[#777] border-r-[#e8e8e8] border-b-[#e8e8e8] border-l-[#777] pt-[2px] pl-[5px]">None Selected</p>
                <button aria-label="Selection lock" class="ml-[2px] flex w-5 justify-center"><svg class="h-4 w-4" viewBox="0 0 16 16"><path d="M5.500 8V5c0-3 5-3 5 0v3" fill="none" stroke="#111" stroke-width="1.300"/><path d="M4 8h8v6H4z"/><path d="M4 10.500h8M4 12.500h8" stroke="#aaa" stroke-width=".7"/></svg></button>
                <button aria-label="Transform type-in mode" class="mr-1 ml-[10px] flex w-4 justify-center"><svg class="h-4 w-4" viewBox="0 0 16 16"><path d="M.5.500h15v15H.5zM8 1v14M1 8h14" fill="none" stroke="#222"/><circle cx="8" cy="8" r="2" fill="#777" stroke="#111"/></svg></button>
                <label for="pos-x" class="w-[14px] pl-[3px]">X:</label>
                <input id="pos-x" type="text" value="-0,0" class="h-[21px] w-[58px] border border-t-black border-r-[#eee] border-b-[#eee] border-l-black bg-[#e1e1e1] pl-[3px] text-[#777] outline-none">
                <label for="pos-y" class="ml-[10px] w-[14px] pl-[3px]">Y:</label>
                <input id="pos-y" type="text" value="-92,128" class="h-[21px] w-[58px] border border-t-black border-r-[#eee] border-b-[#eee] border-l-black bg-[#e1e1e1] pl-[3px] text-[#777] outline-none">
                <label for="pos-z" class="ml-[10px] w-[14px] pl-[3px]">Z:</label>
                <input id="pos-z" type="text" value="18,505" class="mr-3 h-[21px] w-[58px] border border-t-black border-r-[#eee] border-b-[#eee] border-l-black bg-[#e1e1e1] pl-[3px] text-[#777] outline-none">
            </div>
            <p class="h-[21px] truncate border border-t-[#777] border-r-[#e8e8e8] border-b-[#e8e8e8] border-l-[#777] pt-[2px] pl-[5px]">Click and drag up-and-down to zoom in and out</p>
        </div>
        <div class="flex w-[99px] flex-col gap-1 pt-[2px]">
            <p class="h-[21px] border border-t-[#777] border-r-[#e8e8e8] border-b-[#e8e8e8] border-l-[#777] pt-[2px] pl-[5px]">Grid = 10,0</p>
            <button class="h-[21px] border border-t-[#777] border-r-[#e8e8e8] border-b-[#e8e8e8] border-l-[#777] pl-[5px] text-left">Add Time Tag</button>
        </div>
        <button aria-label="Set keys" class="h-[46px] w-[43px] border border-t-white border-r-[#777] border-b-[#777] border-l-white"><svg class="mx-auto h-4 w-7" viewBox="0 0 28 16"><circle cx="6" cy="8" r="4" fill="none" stroke="#000" stroke-width="2"/><path d="M10 8h15" stroke="#000" stroke-width="2"/><path d="M19 9h2v4h-2zM23 9h2v4h-2z"/></svg></button>
        <div class="ml-px flex w-12 flex-col">
            <button class="h-[23px] border border-t-white border-r-[#777] border-b-[#777] border-l-white whitespace-nowrap">Auto Key</button>
            <button class="h-[23px] border border-t-white border-r-[#777] border-b-[#777] border-l-white">Set Key</button>
        </div>
        <div class="ml-[2px] flex w-[115px] flex-col gap-[2px] pt-[2px]">
            <div class="relative h-5 border-2 border-t-[#777] border-r-[#e8e8e8] border-b-[#e8e8e8] border-l-[#777] bg-[#e1e1e1]">
                <select aria-label="Key set" class="h-4 w-full appearance-none bg-transparent pl-px leading-4 outline-none"><option>Selected</option></select>
                <span class="pointer-events-none absolute inset-y-0 right-0 flex w-4 items-center justify-center border border-t-white border-r-[#777] border-b-[#777] border-l-white bg-[#e4e4e4]"><svg class="h-1 w-2"><use href="#drop"/></svg></span>
            </div>
            <div class="flex">
                <button aria-label="Default tangents" class="w-[26px]"><svg class="h-[22px] w-6" viewBox="0 0 24 22"><path d="M2 15l4 3C9 16 9 4 12 4s3 9 6 12" fill="none" stroke="#a44" stroke-width="1.300"/><path d="M3 14h5M9 4h7" stroke="#888"/><use href="#fly" x="18" y="17" width="4" height="4"/></svg></button>
                <button class="h-[22px] flex-1 border border-t-white border-r-[#777] border-b-[#777] border-l-white">Key Filters...</button>
            </div>
        </div>
        <div class="ml-1 flex w-[124px] flex-col pt-px">
            <div class="flex h-6 items-center">
                <button aria-label="Go to start" class="flex w-[22px] justify-center"><svg class="h-4 w-5" viewBox="0 0 20 16"><path d="M2 3h2v9H2zM11 3v9L4 7.500zM18 3v9l-7-4.500z"/></svg></button>
                <span class="mx-px h-4 w-px bg-[#888]"></span>
                <button aria-label="Previous frame" class="flex w-[23px] justify-center"><svg class="h-4 w-5" viewBox="0 0 20 16"><path d="M9 3v9L3 7.500zM9 5h3v5H9zM13 4h1v7h-1zM15 4h2v7h-2z"/></svg></button>
                <button aria-label="Play animation" class="flex w-[23px] justify-center"><svg class="h-5 w-5" viewBox="0 0 20 20"><rect x="3" y="3" width="14" height="14" fill="#ccc" stroke="#000" stroke-width="2"/><path d="M7 6v8l6-4z"/><use href="#fly" x="16" y="16" width="4" height="4"/></svg></button>
                <button aria-label="Next frame" class="flex w-[23px] justify-center"><svg class="h-4 w-5" viewBox="0 0 20 16"><path d="M11 3v9l6-4.500zM8 5h3v5H8zM6 4h1v7H6zM3 4h2v7H3z"/></svg></button>
                <span class="mx-px h-4 w-px bg-[#888]"></span>
                <button aria-label="Go to end" class="flex w-[22px] justify-center"><svg class="h-4 w-5" viewBox="0 0 20 16"><path d="M16 3h2v9h-2zM9 3v9l7-4.500zM2 3v9l7-4.500z"/></svg></button>
            </div>
            <div class="flex h-[22px] items-center">
                <button aria-label="Key mode toggle" class="flex w-[22px] justify-center"><svg class="h-4 w-4" viewBox="0 0 16 16"><path d="M2 4h1v7H2zM8 4v7L3 7.500zM12 4v7L8 7.500zM13 4h1v7h-1z"/></svg></button>
                <span class="mx-px h-4 w-px bg-[#888]"></span>
                <input type="text" aria-label="Current frame" value="0" class="h-[21px] w-16 border-2 border-t-black border-r-[#eee] border-b-[#eee] border-l-black bg-[#e1e1e1] pl-[2px] outline-none">
                <button aria-label="Step frame" class="h-5 w-[10px] border border-t-white border-r-[#777] border-b-[#777] border-l-white"><svg class="mx-auto h-3 w-[6px]" viewBox="0 0 6 12"><path d="M0 4h6L3 1zM0 8h6l-3 3z"/></svg></button>
                <button aria-label="Time configuration" class="ml-[5px] flex w-4 justify-center"><svg class="h-4 w-4" viewBox="0 0 16 16"><rect x="1.500" y="2.500" width="11" height="10" fill="#ddd" stroke="#445"/><path d="M1 2h12v2H1z" fill="#445"/><circle cx="10.500" cy="10" r="4" fill="#eee" stroke="#933"/><path d="M10.500 7.500V10h2" fill="none" stroke="#933"/></svg></button>
            </div>
        </div>
        <div class="mr-1 grid w-[93px] grid-cols-4 grid-rows-2 border-l border-[#888] pb-[2px]">
            <button aria-label="Zoom" aria-pressed="true" class="flex items-center justify-center border border-t-[#8a7530] border-r-white border-b-white border-l-[#8a7530] bg-[#f2c64f]"><svg class="h-5 w-5" viewBox="0 0 20 20"><path d="M11 11l6 6" stroke="#553" stroke-width="3"/><circle cx="8" cy="8" r="5" fill="#eef0fa" stroke="#556" stroke-width="1.500"/></svg></button>
            <button aria-label="Zoom all" class="flex items-center justify-center"><svg class="h-5 w-5" viewBox="0 0 20 20"><path d="M6 3.500h12v10h-6M6 8.500h12M6.500 3v6M12.500 3v11" stroke="#933" stroke-width="1.400" fill="none"/><path d="M8 13l5 5" stroke="#335" stroke-width="2"/><circle cx="6" cy="11" r="4" fill="#e4e8fa" stroke="#446"/></svg></button>
            <button aria-label="Zoom extents" class="flex items-center justify-center"><svg class="h-5 w-5" viewBox="0 0 20 20"><path d="M5 7l3-3h8v8l-3 3H5z" fill="#8e99c4" stroke="#225"/><path d="M5 7h8v8" fill="none" stroke="#225"/><path d="M2 5V2h3M15 2h3v3M2 15v3h3" fill="none" stroke="#222"/><use href="#fly" x="16" y="16" width="4" height="4"/></svg></button>
            <button aria-label="Zoom extents all" class="flex items-center justify-center"><svg class="h-5 w-5" viewBox="0 0 20 20"><path d="M7 3.500h11M7 8.500h11M12 13.500h6M7.500 3v6M12.500 3v11M17.500 3v11" stroke="#933" stroke-width="1.400"/><path d="M2 10l2-2h7v6l-2 3H2z" fill="#e4e8fa" stroke="#225"/><path d="M2 10h7v7M9 10l2-2" fill="none" stroke="#225"/><use href="#fly" x="16" y="16" width="4" height="4"/></svg></button>
            <button aria-label="Region zoom" class="flex items-center justify-center"><svg class="h-5 w-5" viewBox="0 0 20 20"><rect x="2.500" y="3.500" width="15" height="14" fill="none" stroke="#111" stroke-dasharray="2 1"/><path d="M11 12l5 5" stroke="#335" stroke-width="2.500"/><circle cx="9" cy="9" r="4" fill="#e4e8fa" stroke="#446" stroke-width="1.300"/></svg></button>
            <button aria-label="Pan view" class="flex items-center justify-center"><svg class="h-5 w-5" viewBox="0 0 20 20"><path d="M8 18c-2-3-5-5-6-7 1-1 3-1 4 1L4 5c1-1 2-1 3 1l1 4-1-7c1-1 2-1 3 0l1 6 1-5c1-1 2-1 2 1v6l2-3c1-1 2 0 2 1-1 4-2 6-4 9z" fill="#fff" stroke="#222"/></svg></button>
            <button aria-label="Arc rotate" class="flex items-center justify-center"><svg class="h-5 w-5" viewBox="0 0 20 20"><path d="M9 2v9l8 2M9 11l-6 5" fill="none" stroke="#225" stroke-width="1.300"/><circle cx="9" cy="11" r="4.500" fill="none" stroke="#447"/><path d="M7 5l2-4 2 4zM15 10l4 3-4 2zM1 17l2-4 2 3z" fill="#335"/><use href="#fly" x="16" y="16" width="4" height="4"/></svg></button>
            <button aria-label="Maximize viewport toggle" class="flex items-center justify-center"><svg class="h-5 w-5" viewBox="0 0 20 20"><rect x="3.500" y="3.500" width="9" height="9" fill="#dde" stroke="#226"/><path d="M12 8h6v10H8v-6" fill="none" stroke="#226"/><path d="M6 6l9 9M6 9V6h3M15 12v3h-3" fill="none" stroke="#111"/></svg></button>
        </div>
    </footer>

    <script>
        const WORD = 'SLOTHICORN';
        const LIME = '#c6de5e';
        const BLUE = '#9db2da';

        const line = (x1, y1, x2, y2, color, w = 1) =>
            `<path d="M${x1} ${y1}L${x2} ${y2}" stroke="${color}" stroke-width="${w}" fill="none"/>`;

        const glyph = (ch, x, y, size) =>
            `<text x="${x}" y="${y}" font-size="${size}" font-weight="700" font-family="Roboto, sans-serif" text-anchor="middle" fill="none" stroke="${BLUE}" stroke-width="1">${ch}</text>`;

        const mark = (ch, x, y, color) =>
            `<text x="${x}" y="${y}" font-size="10" font-family="Liberation Sans, sans-serif" fill="${color}">${ch}</text>`;

        // Axis tripod for views that look along one axis
        function tripod(x, y, up, upColor, origin, originColor) {
            return line(x, y, x, y - 26, upColor) + line(x, y, x + 25, y, '#a01818') +
                mark(up, x, y - 26, upColor) + mark('x', x + 25, y - 1, '#b01818') + mark(origin, x, y - 1, originColor);
        }

        // Top view
        let top_ = '';
        [...WORD].forEach((ch, i) => {
            const x = 13 + i * 50;
            top_ += glyph(ch, x + 23.5, 161, 50);
            top_ += `<rect x="${x + 2}" y="122" width="43" height="43" rx="2" fill="none" stroke="${LIME}" stroke-width="4"/>`;
            top_ += line(x + 23.5, 122, x + 23.5, 165, LIME) + line(x + 2, 143.5, x + 45, 143.5, LIME);
        });
        document.getElementById('view-top').innerHTML = top_ + tripod(25.5, 260.5, 'y', '#109018', 'z', '#10109a');

        // Front view
        let front = '';
        for (let i = 0; i < 10; i++) {
            const x = Math.round(39 + i * 44.8);
            front += line(x + 9, 122.5, x + 32, 122.5, '#a9c49a');
            front += `<rect x="${x + 1.5}" y="124.500" width="39" height="39" rx="2" fill="none" stroke="${LIME}" stroke-width="3"/>`;
            front += line(x + 20.5, 124, x + 20.5, 163, LIME) + line(x + 2, 143.5, x + 40, 143.5, LIME);
        }
        document.getElementById('view-front').innerHTML = front + tripod(25.5, 260.5, 'z', '#10109a', 'y', '#109018');

        // Left view: one box seen from the side, fillet segments close together near the edges
        let left = `<path d="M176 30h193v7H176z" fill="#9db8e4"/>`;
        [183, 185, 192, 195, 200, 203, 205, 222, 233, 238, 259, 261, 264, 266, 268, 270, 272, 275, 277, 279, 281, 308, 313, 318, 323, 326, 330, 338, 340, 342, 344, 347, 349, 352, 353, 355, 358, 360].forEach(x => {
            left += line(x + 0.5, 31, x + 0.5, 37, '#6f7884');
        });
        left += '<clipPath id="box"><rect x="154" y="37" width="238" height="238" rx="16"/></clipPath><g clip-path="url(#box)">';
        left += '<path d="M154 37h238v238H154zM172 55v202h202V55z" fill="#7e8454" fill-rule="evenodd"/>';
        [4, 6, 8, 10, 12, 14, 17].forEach(d => {
            left += line(154.5 + d, 37, 154.5 + d, 275, LIME) + line(391.5 - d, 37, 391.5 - d, 275, LIME);
            left += line(154, 37.5 + d, 392, 37.5 + d, LIME) + line(154, 274.5 - d, 392, 274.5 - d, LIME);
        });
        left += '</g>';
        left += `<rect x="156" y="39" width="234" height="234" rx="15" fill="none" stroke="${LIME}" stroke-width="4"/>`;
        left += line(272.5, 38, 272.5, 274, LIME) + line(155, 156.5, 391, 156.5, LIME);
        left += line(25.5, 260.5, 25.5, 236, '#10109a') + line(2, 260.5, 25.5, 260.5, '#109018') +
            mark('z', 25, 234, '#10109a') + mark('y', 1, 259, '#109018') + mark('x', 25, 259, '#b01818');
        document.getElementById('view-left').innerHTML = left;

        // Perspective view: rear top, front top, front bottom and rear bottom edges of each box
        const levels = [
            { y: 116, k: 0.990, w: 3 },
            { y: 154, k: 1.000, w: 5 },
            { y: 170, k: 0.976, w: 3 },
            { y: 132, k: 0.964, w: 5 }
        ];
        const mid = 262;
        let persp = '';
        [...WORD].forEach((ch, i) => {
            const a = -248 + i * 50;
            const b = a + 45;
            persp += glyph(ch, mid + (a + b) / 2, 149, 46);
            [a, b].forEach(side => {
                const pts = levels.map(l => `${(mid + side * l.k).toFixed(1)} ${l.y}`);
                persp += `<path d="M${pts.join('L')}Z" fill="none" stroke="${LIME}" stroke-width="4" stroke-linejoin="round"/>`;
            });
            levels.forEach(l => {
                persp += line((mid + a * l.k).toFixed(1), l.y, (mid + b * l.k).toFixed(1), l.y, LIME, l.w);
            });
            const c = (a + b) / 2;
            persp += line(mid + c * 0.99, 116, mid + c, 154, LIME) + line(mid + c, 154, mid + c * 0.976, 170, LIME);
            persp += line(mid + a * 0.984, 164.5, mid + b * 0.984, 164.5, LIME);
        });
        persp += line(25.5, 260.5, 25.5, 236, '#109018') + line(25.5, 260.5, 25.5, 250, '#10109a') + line(25.5, 260.5, 50, 260.5, '#a01818') +
            mark('y', 25, 236, '#109018') + mark('z', 25, 249, '#10109a') + mark('x', 50, 259, '#b01818');
        document.getElementById('view-persp').innerHTML = persp;

        // Frame ruler
        let ruler = '<rect x="50.500" y="1" width="8" height="25" fill="#6f93ad" stroke="#4f6f88"/>';
        for (let f = 0; f <= 100; f++) {
            const x = Math.floor(54 + f * 9.48) + 0.5;
            ruler += line(x, 2, x, f % 5 ? 12 : 26, '#808080');
            if (f % 5 === 0) {
                ruler += `<text x="${x}" y="23" text-anchor="middle" font-size="11" font-family="Liberation Sans, sans-serif">${f}</text>`;
            }
        }
        ruler += '<g fill="none" stroke="#111"><rect x="13.500" y="6.500" width="16" height="4"/><path d="M14 9l4-1 4 1 4-1 3 1M13 18.500h17M13 21.500h17M17 17v-5M26 12v5M15 14l2-2 2 2M24 15l2 2 2-2"/></g>';
        document.getElementById('ruler').innerHTML = ruler;
    </script>
</body>
</html>
